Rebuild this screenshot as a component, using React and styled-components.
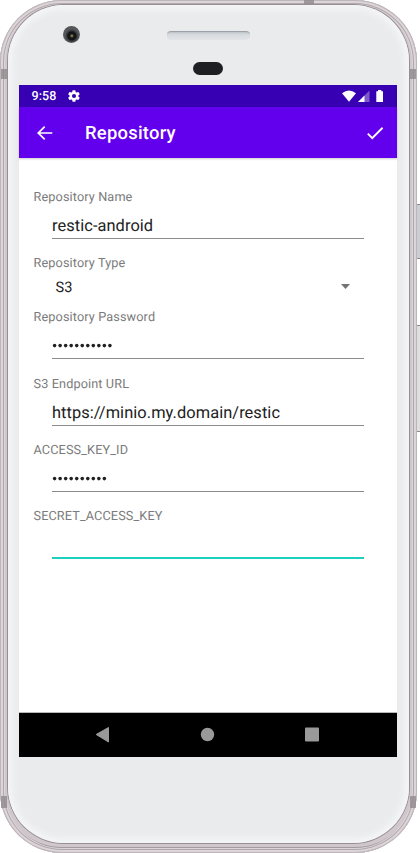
import React from "react";
import styled, { createGlobalStyle } from "styled-components";

const Global = createGlobalStyle`
  *, *::before, *::after { box-sizing: border-box; }
  html, body { margin: 0; background: #fff; }
  body { width: 420px; height: 853px; overflow: hidden; font-family: Roboto, "Liberation Sans", sans-serif; text-rendering: geometricPrecision; }
`;

const Stage = styled.div`
  position: relative;
  width: 420px;
  height: 853px;
  overflow: hidden;
`;

const SideButton = styled.div`
  position: absolute;
  left: 414px;
  top: ${(p) => p.$top}px;
  width: 10px;
  height: ${(p) => p.$height}px;
  border: 1px solid #8f8b8e;
  border-radius: 2px;
  background: ${(p) => p.$tone};
`;

const Frame = styled.div`
  position: relative;
  width: 417px;
  height: 853px;
  padding: 5px 8px 10px;
  border-radius: 62px;
  background: #cfc7cb;
  box-shadow: inset 0 0 0 1px #bdb5b9, inset 0 0 0 3px #dcd5d8, inset 0 0 0 4px #b0a8ac,
    inset 0 0 0 5px #dcd5d8, inset 0 -4px 0 2px #a39a9f;
`;

const Antenna = styled.i`
  position: absolute;
  left: ${(p) => p.$x}px;
  top: ${(p) => p.$y}px;
  width: ${(p) => p.$w}px;
  height: ${(p) => p.$h}px;
  background: #91898dcc;
`;

const Face = styled.div`
  position: relative;
  height: 838px;
  padding: 80px 11px 0;
  border-radius: 56px;
  background: #eaebed;
  box-shadow: 0 0 0 1px #978f94, inset 0 0 7px 4px #f5f6f8;
`;

const Camera = styled.div`
  position: absolute;
  left: 55px;
  top: 21px;
  width: 17px;
  height: 17px;
  border-radius: 50%;
  background: radial-gradient(circle at 52% 58%, #77713c 0 1px, #141519 2px 4px, #333538 5px, #58595c 7px, #4f5053);
`;

const Speaker = styled.div`
  position: absolute;
  left: 159px;
  top: 26px;
  width: 83px;
  height: 9px;
  border-radius: 4px;
  border-top: 1px solid #9ba2a9;
  background: linear-gradient(#bcc3c9, #d6d9dd 30%, #e2e4e8);
`;

const Sensor = styled.div`
  position: absolute;
  left: 185px;
  top: 57px;
  width: 30px;
  height: 13px;
  border-radius: 7px;
  background: #1d1f23;
`;

const Screen = styled.main`
  display: flex;
  flex-direction: column;
  width: 378px;
  height: 672px;
  background: #fff;
`;

const StatusBar = styled.div`
  display: flex;
  align-items: center;
  height: 22px;
  padding: 0 13px 0 12.5px;
  background: #3700b3;
  color: #fff;
  font-size: 12.5px;
  font-weight: 500;
  letter-spacing: 0.1px;
`;

const SettingsIcon = styled.svg`
  width: 14px;
  height: 14px;
  margin-left: 10px;
`;

const Signals = styled.svg`
  width: 43px;
  height: 14px;
  margin-left: auto;
`;

const AppBar = styled.header`
  display: flex;
  align-items: center;
  flex: none;
  height: 51px;
  padding: 0 11px 0 15px;
  background: #6200ee;
  color: #fff;
  box-shadow: 0 1px 2px #0003;
`;

const BarIcon = styled.svg`
  width: 22px;
  height: 22px;
`;

const Title = styled.h1`
  flex: 1;
  margin: 2px 0 0 29px;
  font-size: 18.4px;
  font-weight: 500;
  letter-spacing: 0.25px;
`;

const Form = styled.form`
  flex: 1;
  padding: 31px 33.5px 0 14.5px;
`;

const Field = styled.div`
  height: ${(p) => p.$height || 66.25}px;
`;

const Label = styled.label`
  display: block;
  height: 16px;
  line-height: 18px;
  color: #7b7b7b;
  font-size: 12.7px;
  letter-spacing: 0.12px;
`;

const Value = styled.div`
  height: 34px;
  margin-left: 18.5px;
  padding-top: 12px;
  border-bottom: 1px solid #8b8b8b;
  color: #212121;
  font-size: 16.4px;
  line-height: 20px;
  letter-spacing: 0.07px;
`;

const ActiveValue = styled(Value)`
  height: 35px;
  border-bottom: 2px solid #1ad1c0;
`;

const Dots = styled.svg`
  display: block;
  height: 20px;
  width: 80px;
`;

const Select = styled.div`
  display: flex;
  align-items: center;
  justify-content: space-between;
  height: 31px;
  padding: 0 13.5px 0 22px;
  color: #212121;
  font-size: 14.6px;
`;

const Arrow = styled.svg`
  width: 9px;
  height: 5px;
`;

const NavBar = styled.nav`
  height: 45px;
  border-top: 1px solid #b8b8b8;
  background: #000;
`;

const NavIcons = styled.svg`
  display: block;
  width: 378px;
  height: 44px;
`;

function Secret({ count }) {
  return (
    <Dots viewBox="0 0 80 20" fill="#212121">
      {Array.from({ length: count }, (_, i) => (
        <circle key={i} cx={2.6 + i * 5.53} cy="8.6" r="1.8" />
      ))}
    </Dots>
  );
}

function TextField({ label, active, children }) {
  const Box = active ? ActiveValue : Value;
  return (
    <Field>
      <Label>{label}</Label>
      <Box>{children}</Box>
    </Field>
  );
}

export default function App() {
  return (
    <Stage>
      <Global />
      <SideButton $top={204} $height={55} $tone="#c9cfd3" />
      <SideButton $top={325} $height={107} $tone="#dfdfdf" />
      <Frame>
        <Antenna $x={304} $y={0} $w={10} $h={5} />
        <Antenna $x={1} $y={69} $w={6} $h={10} />
        <Antenna $x={410} $y={69} $w={6} $h={10} />
        <Antenna $x={1} $y={796} $w={6} $h={12} />
        <Antenna $x={410} $y={796} $w={6} $h={12} />
        <Face>
          <Camera />
          <Speaker />
          <Sensor />
          <Screen>
            <StatusBar>
              9:58
              <SettingsIcon viewBox="0 0 24 24" fill="#fff">
                <path d="M19.4 13a7.8 7.8 0 0 0 0-2l2.1-1.7c.2-.1.2-.4.1-.6l-2-3.5c-.1-.2-.4-.3-.6-.2l-2.5 1a7.3 7.3 0 0 0-1.7-1l-.4-2.6a.5.5 0 0 0-.5-.4h-4a.5.5 0 0 0-.5.4L9 5a7.3 7.3 0 0 0-1.7 1l-2.5-1c-.2-.1-.5 0-.6.2l-2 3.5c-.1.2-.1.5.1.6L4.5 11a7.8 7.8 0 0 0 0 2l-2.2 1.7c-.2.1-.2.4-.1.6l2 3.5c.1.2.4.3.6.2l2.5-1a7.3 7.3 0 0 0 1.7 1l.4 2.6c0 .2.2.4.5.4h4c.3 0 .5-.2.5-.4l.4-2.6a7.3 7.3 0 0 0 1.7-1l2.5 1c.2.1.5 0 .6-.2l2-3.5c.1-.2.1-.5-.1-.6zM12 15.5a3.5 3.5 0 1 1 0-7 3.5 3.5 0 0 1 0 7z" />
              </SettingsIcon>
              <Signals viewBox="0 0 43 14">
                <path d="M1 4.300Q8 -1.400 15 4.300L8 12.700z" fill="#fff" />
                <path d="M28.500 1.500v11.500H17z" fill="#7d59cd" />
                <path d="M23.500 6.500V13H17z" fill="#fff" />
                <path d="M35.300 2.200H37V1h3.300v1.200H42V13h-6.700z" fill="#fff" />
              </Signals>
            </StatusBar>
            <AppBar>
              <BarIcon viewBox="0 0 24 24" fill="#fff">
                <path d="M20 11.050H6.800l5.500-5.400L11 4.400 3.300 12l7.700 7.600 1.300-1.250-5.500-5.400H20z" />
              </BarIcon>
              <Title>Repository</Title>
              <BarIcon viewBox="0 0 24 24" fill="#fff">
                <path d="M9 16.170 4.830 12l-1.420 1.410L9 19 21 7l-1.410-1.410z" />
              </BarIcon>
            </AppBar>
            <Form>
              <TextField label="Repository Name">restic-android</TextField>
              <Field $height={54}>
                <Label>Repository Type</Label>
                <Select>
                  S3
                  <Arrow viewBox="0 0 9 5" fill="#737373"><path d="M0 0h9L4.500 5z" /></Arrow>
                </Select>
              </Field>
              <TextField label="Repository Password"><Secret count={11} /></TextField>
              <TextField label="S3 Endpoint URL">https://minio.my.domain/restic</TextField>
              <TextField label="ACCESS_KEY_ID"><Secret count={10} /></TextField>
              <TextField label="SECRET_ACCESS_KEY" active />
            </Form>
            <NavBar>
              <NavIcons viewBox="0 0 378 44" fill="#999">
                <path d="M77.200 21.500 89.500 14.500v14.500z" stroke="#999" strokeWidth="1" strokeLinejoin="round" />
                <circle cx="188.500" cy="21.500" r="6.700" />
                <rect x="286" y="14.500" width="14" height="14" rx="1" />
              </NavIcons>
            </NavBar>
          </Screen>
        </Face>
      </Frame>
    </Stage>
  );
}
